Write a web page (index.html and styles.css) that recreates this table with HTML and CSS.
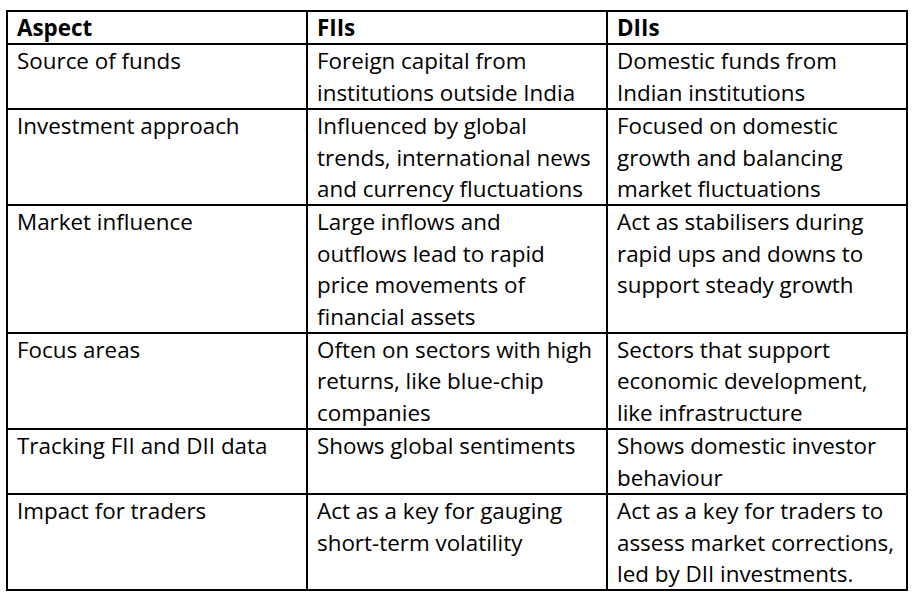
FILE: index.html
```html
<!DOCTYPE html>
<html lang="en">
<head>
<meta charset="utf-8">
<title>FIIs vs DIIs</title>
<link rel="stylesheet" href="styles.css">
</head>
<body>
<table class="cmp">
  <colgroup><col class="c"><col class="c"><col class="c"></colgroup>
  <thead>
    <tr><th>Aspect</th><th>FIIs</th><th>DIIs</th></tr>
  </thead>
  <tbody>
    <tr>
      <td>Source of funds</td>
      <td>Foreign capital from<br>institutions outside India</td>
      <td>Domestic funds from<br>Indian institutions</td>
    </tr>
    <tr>
      <td>Investment approach</td>
      <td>Influenced by global<br>trends, international news<br>and currency fluctuations</td>
      <td>Focused on domestic<br>growth and balancing<br>market fluctuations</td>
    </tr>
    <tr>
      <td>Market influence</td>
      <td>Large inflows and<br>outflows lead to rapid<br>price movements of<br>financial assets</td>
      <td>Act as stabilisers during<br>rapid ups and downs to<br>support steady growth</td>
    </tr>
    <tr>
      <td>Focus areas</td>
      <td>Often on sectors with high<br>returns, like blue-chip<br>companies</td>
      <td>Sectors that support<br>economic development,<br>like infrastructure</td>
    </tr>
    <tr>
      <td>Tracking FII and DII data</td>
      <td>Shows global sentiments</td>
      <td>Shows domestic investor<br>behaviour</td>
    </tr>
    <tr>
      <td>Impact for traders</td>
      <td>Act as a key for gauging<br>short-term volatility</td>
      <td>Act as a key for traders to<br>assess market corrections,<br>led by DII investments.</td>
    </tr>
  </tbody>
</table>
</body>
</html>
```
FILE: styles.css
```css
html, body {
  margin: 0;
  padding: 0;
  background: #ffffff;
}
body {
  padding: 10px 0 0 6px;
  font-family: "Open Sans", "Liberation Sans", sans-serif;
  font-size: 22.4px;
  color: #000;
}
.cmp {
  border-collapse: collapse;
  table-layout: fixed;
  width: 902px;
}
.cmp .c {
  width: 300px;
}
.cmp th,
.cmp td {
  border: 2px solid #000;
  padding: 0 2px 0 9px;
  line-height: 31.4px;
  text-align: left;
  vertical-align: top;
  white-space: nowrap;
  overflow: hidden;
}
.cmp th {
  font-weight: 700;
}
.cmp td {
  font-weight: 400;
}
```
